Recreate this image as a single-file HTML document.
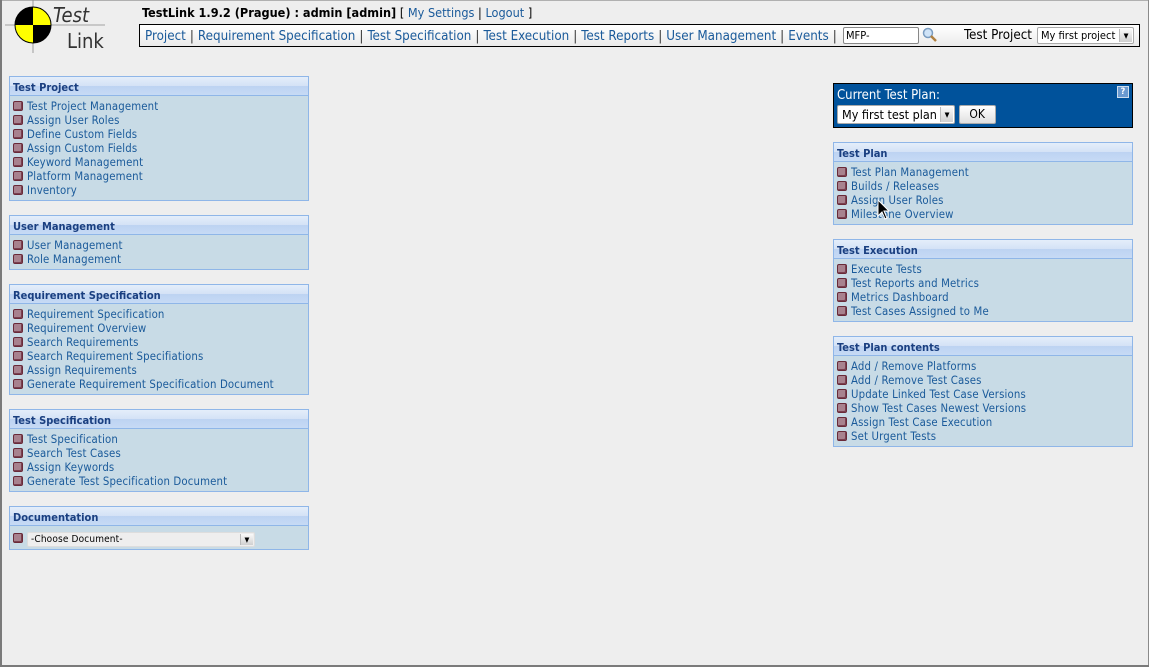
<!DOCTYPE html>
<html><head><meta charset="utf-8"><style>
*{box-sizing:border-box;margin:0;padding:0}
html,body{width:1149px;height:667px;overflow:hidden}
body{background:#eeeeee;font-family:"DejaVu Sans Condensed","DejaVu Sans","Liberation Sans",sans-serif;font-stretch:condensed;position:relative}
.abs{position:absolute}
.title{left:142px;top:5px;font-size:12.6px;color:#000;white-space:nowrap}
.title b{font-weight:bold}
.title a{color:#1a5a9a;font-weight:normal}
a{text-decoration:none;color:#1a5a9a}
.nav{left:139px;top:24px;width:1001px;height:23px;border:1px solid #000;background:linear-gradient(#fff,#ebebeb);font-size:13.3px;padding:4px 0 0 5px;white-space:nowrap}
.nav span.s{color:#333;margin:0 4px}
.box{position:absolute;width:300px;border:1px solid #8fb6e8;background:#c8dbe6}
.box h3{height:19px;font-size:11px;font-weight:bold;color:#1a3f80;padding:4px 3px 0;background:linear-gradient(#e4eefa 0,#d4e2f6 50%,#bdd3f2 51%,#c6daf5 100%);border-bottom:1px solid #8fb6e8}
.box ul{list-style:none;padding:4px 3px 2px 3px}
.box li{font-size:11.3px;height:14px;line-height:14px;color:#1a5a9a;white-space:nowrap;letter-spacing:0.15px}
.box li i{display:inline-block;width:10px;height:10px;background:#a8828e;border:1px solid #6a2a38;border-radius:2px;margin-right:4px;vertical-align:-1px;box-shadow:inset -1px -1px 0 #7a4050}
.ctp{left:833px;top:83px;width:300px;height:45px;background:#00529b;border:1px solid #000;color:#fff;font-size:13px;padding:4px 0 0 3px}
.sel{display:inline-block;background:#fff;border:1px solid #aaa;border-radius:2px;color:#000;position:relative;white-space:nowrap;overflow:hidden}
.arr{position:absolute;right:1px;top:1px;bottom:1px;width:13px;background:linear-gradient(#fafafa,#d0d0d0);border-left:1px solid #bbb;font-size:7px;text-align:center;line-height:14px}
</style></head><body>
<div class="abs" style="left:0;top:0;width:1149px;height:1px;background:#b0b0b0"></div>
<div class="abs" style="left:0;top:0;width:2px;height:667px;background:#7a7a7a"></div>
<div class="abs" style="right:0;top:0;width:1px;height:667px;background:#8a8a8a"></div>
<div class="abs" style="left:0;bottom:0;width:1149px;height:2px;background:#7a7a7a"></div>
<svg class="abs" style="left:3px;top:0" width="120" height="55" viewBox="0 0 120 55">
<line x1="2" y1="25" x2="102" y2="25" stroke="#888" stroke-width="0.8"/>
<line x1="30" y1="0" x2="30" y2="53" stroke="#888" stroke-width="0.8"/>
<circle cx="30" cy="25" r="18" fill="#ffff00" stroke="#000" stroke-width="1"/>
<path d="M30 7 A18 18 0 0 0 12 25 L30 25Z M30 25 L48 25 A18 18 0 0 1 30 43Z" fill="#000"/>
<text x="50" y="22" font-family="DejaVu Sans" font-size="20" fill="#333" font-style="italic">Test</text>
<text x="64" y="48" font-family="DejaVu Sans" font-size="20" fill="#333">Link</text>
</svg>
<div class="abs title"><b>TestLink 1.9.2 (Prague) : admin [admin]</b> [ <a>My Settings</a> | <a>Logout</a> ]</div>
<div class="abs nav"><a>Project</a><span class="s">|</span><a>Requirement Specification</a><span class="s">|</span><a>Test Specification</a><span class="s">|</span><a>Test Execution</a><span class="s">|</span><a>Test Reports</a><span class="s">|</span><a>User Management</a><span class="s">|</span><a>Events</a><span class="s">|</span></div>
<div class="abs" style="left:843px;top:27px;width:76px;height:17px;background:#fff;border:1px solid #888;border-radius:2px;font-size:11px;padding:1px 2px">MFP-</div>
<svg class="abs" style="left:922px;top:27px" width="16" height="16"><circle cx="6" cy="6" r="4.5" fill="#cfe3f7" stroke="#7a9cc0" stroke-width="1.5"/><line x1="9" y1="9" x2="14" y2="14" stroke="#b08040" stroke-width="2.5"/></svg>
<div class="abs" style="left:964px;top:28px;font-size:13.3px">Test Project</div>
<div class="abs sel" style="left:1037px;top:27px;width:97px;height:17px;font-size:11px;padding:1px 3px">My first project<span class="arr">▼</span></div>

<div class="box" style="left:9px;top:76px"><h3>Test Project</h3><ul>
<li><i></i>Test Project Management</li><li><i></i>Assign User Roles</li><li><i></i>Define Custom Fields</li><li><i></i>Assign Custom Fields</li><li><i></i>Keyword Management</li><li><i></i>Platform Management</li><li><i></i>Inventory</li></ul></div>
<div class="box" style="left:9px;top:215px"><h3>User Management</h3><ul>
<li><i></i>User Management</li><li><i></i>Role Management</li></ul></div>
<div class="box" style="left:9px;top:284px"><h3>Requirement Specification</h3><ul>
<li><i></i>Requirement Specification</li><li><i></i>Requirement Overview</li><li><i></i>Search Requirements</li><li><i></i>Search Requirement Specifiations</li><li><i></i>Assign Requirements</li><li><i></i>Generate Requirement Specification Document</li></ul></div>
<div class="box" style="left:9px;top:409px"><h3>Test Specification</h3><ul>
<li><i></i>Test Specification</li><li><i></i>Search Test Cases</li><li><i></i>Assign Keywords</li><li><i></i>Generate Test Specification Document</li></ul></div>
<div class="box" style="left:9px;top:506px;height:44px"><h3>Documentation</h3><ul>
<li style="height:18px;line-height:18px"><i></i><span class="sel" style="width:228px;height:15px;font-size:10px;line-height:13px;padding-left:3px;background:#eee;border-color:#ddd;vertical-align:middle">-Choose Document-<span class="arr" style="line-height:12px">▼</span></span></li></ul></div>

<div class="abs ctp">Current Test Plan:
<div class="abs" style="right:3px;top:2px;width:12px;height:12px;background:#6a9ad0;border:1px solid #cde;color:#fff;font-size:9px;font-weight:bold;text-align:center;line-height:10px">?</div>
<div style="margin-top:2px"><span class="sel" style="width:118px;height:19px;font-size:12.5px;padding:1px 4px;line-height:16px;vertical-align:top">My first test plan<span class="arr" style="line-height:16px">▼</span></span> <span class="sel" style="width:37px;height:19px;font-size:12px;text-align:center;line-height:17px;background:linear-gradient(#fff,#e0e0e0);vertical-align:top">OK</span></div></div>

<div class="box" style="left:833px;top:142px"><h3>Test Plan</h3><ul>
<li><i></i>Test Plan Management</li><li><i></i>Builds / Releases</li><li><i></i>Assign User Roles</li><li><i></i>Milestone Overview</li></ul></div>
<div class="box" style="left:833px;top:239px"><h3>Test Execution</h3><ul>
<li><i></i>Execute Tests</li><li><i></i>Test Reports and Metrics</li><li><i></i>Metrics Dashboard</li><li><i></i>Test Cases Assigned to Me</li></ul></div>
<div class="box" style="left:833px;top:336px"><h3>Test Plan contents</h3><ul>
<li><i></i>Add / Remove Platforms</li><li><i></i>Add / Remove Test Cases</li><li><i></i>Update Linked Test Case Versions</li><li><i></i>Show Test Cases Newest Versions</li><li><i></i>Assign Test Case Execution</li><li><i></i>Set Urgent Tests</li></ul></div>
<svg class="abs" style="left:877px;top:199px" width="14" height="22"><path d="M1 1 L1 17 L5 13 L8 20 L10 19 L7 12 L12 12 Z" fill="#000" stroke="#fff" stroke-width="1"/></svg>
</body></html>
